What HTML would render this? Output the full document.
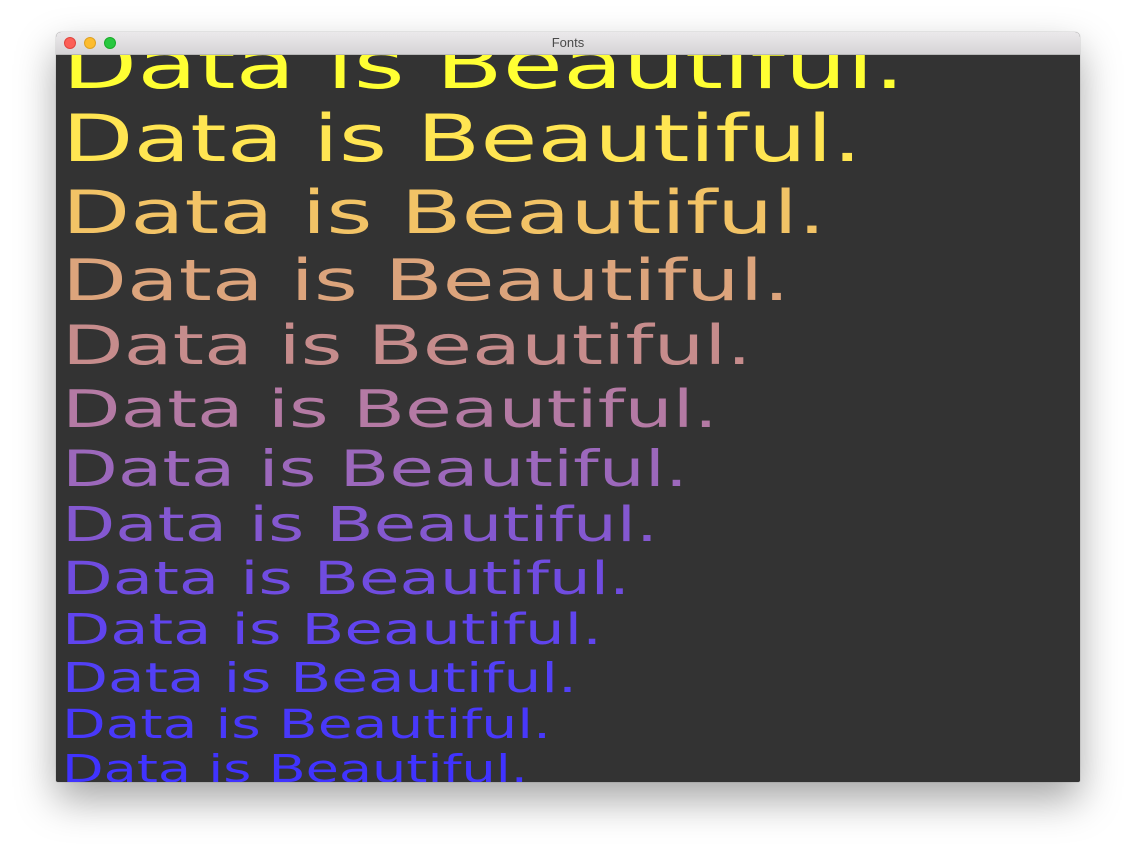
<!DOCTYPE html>
<html><head><style>
body{margin:0;width:1136px;height:862px;background:#fff;overflow:hidden;font-family:"Liberation Sans",sans-serif}
.win{position:absolute;left:56px;top:32px;width:1024px;height:750px;border-radius:5px 5px 2px 2px;box-shadow:0 18px 40px rgba(0,0,0,0.35),0 0 1px rgba(0,0,0,0.4);overflow:hidden;background:#333}
.tb{position:absolute;left:0;top:0;width:1024px;height:22px;background:linear-gradient(#ebe9eb,#d6d4d6);border-bottom:1px solid #b8b8b8;text-align:center;font-size:13px;line-height:22px;color:#4a4a4a}
.d{position:absolute;top:5px;width:12px;height:12px;border-radius:50%}
svg{position:absolute;left:0;top:0}
</style></head><body>
<div class="win">
<svg width="1024" height="750" viewBox="56 32 1024 750" font-family="DejaVu Sans, sans-serif">
<g>
<text x="62" y="88" font-size="68" textLength="843" lengthAdjust="spacingAndGlyphs" fill="#ffff33">Data is Beautiful.</text>
<text x="62" y="161" font-size="65" textLength="800" lengthAdjust="spacingAndGlyphs" fill="#ffe552">Data is Beautiful.</text>
<text x="62" y="233" font-size="60" textLength="764" lengthAdjust="spacingAndGlyphs" fill="#f2c366">Data is Beautiful.</text>
<text x="62" y="300" font-size="57" textLength="728" lengthAdjust="spacingAndGlyphs" fill="#dca47c">Data is Beautiful.</text>
<text x="62" y="364" font-size="54" textLength="690" lengthAdjust="spacingAndGlyphs" fill="#c68c8c">Data is Beautiful.</text>
<text x="62" y="427" font-size="52" textLength="656" lengthAdjust="spacingAndGlyphs" fill="#b47aa4">Data is Beautiful.</text>
<text x="62" y="486" font-size="50" textLength="626" lengthAdjust="spacingAndGlyphs" fill="#9c68bc">Data is Beautiful.</text>
<text x="62" y="541" font-size="48" textLength="596" lengthAdjust="spacingAndGlyphs" fill="#8458d0">Data is Beautiful.</text>
<text x="62" y="594" font-size="45" textLength="568" lengthAdjust="spacingAndGlyphs" fill="#704ce0">Data is Beautiful.</text>
<text x="62" y="644" font-size="43" textLength="540" lengthAdjust="spacingAndGlyphs" fill="#6044ee">Data is Beautiful.</text>
<text x="62" y="692" font-size="41" textLength="515" lengthAdjust="spacingAndGlyphs" fill="#5240f6">Data is Beautiful.</text>
<text x="62" y="738" font-size="40" textLength="489" lengthAdjust="spacingAndGlyphs" fill="#4838fa">Data is Beautiful.</text>
<text x="62" y="782" font-size="38" textLength="466" lengthAdjust="spacingAndGlyphs" fill="#4033ff">Data is Beautiful.</text>
</g>
</svg>
<div class="tb">Fonts
<div class="d" style="left:8px;background:#fc5f57;border:0.5px solid #e0443e;box-sizing:border-box"></div>
<div class="d" style="left:28px;background:#fdbc2e;border:0.5px solid #dea123;box-sizing:border-box"></div>
<div class="d" style="left:48px;background:#28c840;border:0.5px solid #1aab29;box-sizing:border-box"></div>
</div>
</div>
</body></html>
